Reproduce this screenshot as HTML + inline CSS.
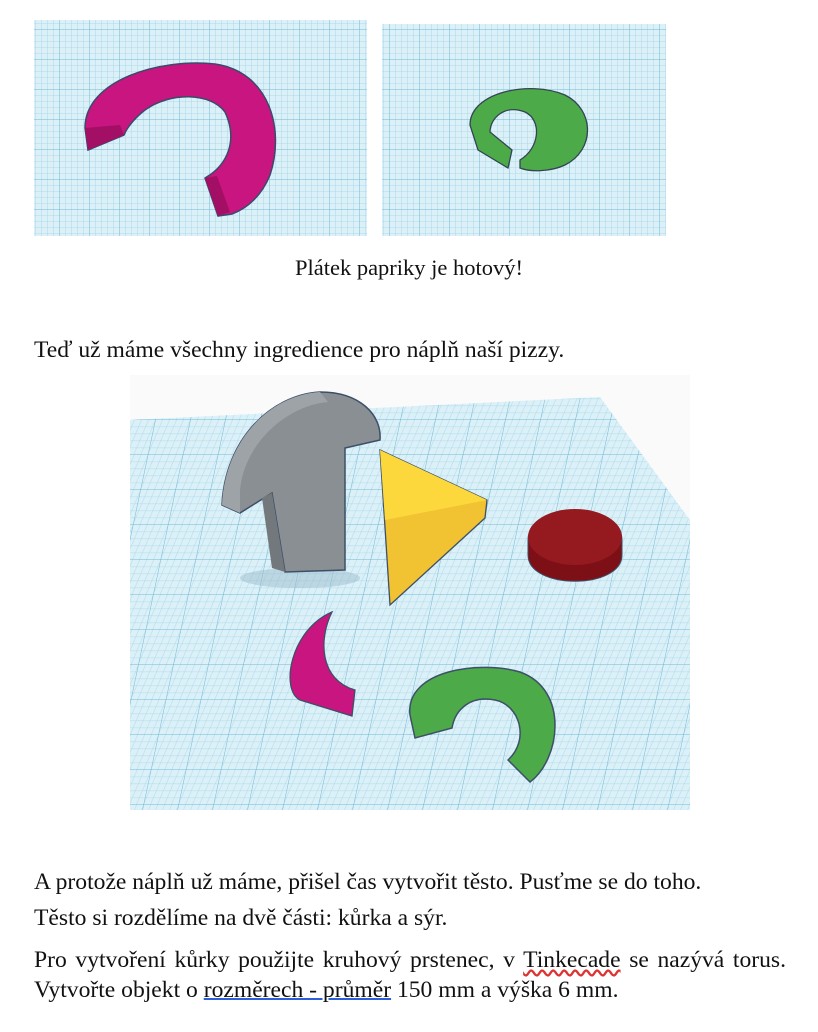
<!DOCTYPE html>
<html><head><meta charset="utf-8"><style>
body{margin:0;width:818px;height:1032px;background:#fff;position:relative;overflow:hidden;font-family:"Liberation Serif",serif;font-size:23.6px;color:#111}
.t{position:absolute;left:34px;white-space:nowrap}
svg{position:absolute}
</style></head><body>
<svg width="818" height="1032" viewBox="0 0 818 1032" style="left:0;top:0">
<defs>
<pattern id="g" width="6" height="6" patternUnits="userSpaceOnUse">
<rect width="6" height="6" fill="#dcf0f8"/><path d="M6 0V6M0 6H6" stroke="#9fd3e7" stroke-width="0.8"/></pattern>
<pattern id="G" width="30" height="30" patternUnits="userSpaceOnUse">
<rect width="30" height="30" fill="url(#g)"/><path d="M30 0V30M0 30H30" stroke="#6fb9d6" stroke-width="1"/></pattern>
<pattern id="gs" width="7" height="7" patternUnits="userSpaceOnUse" patternTransform="skewX(-12)">
<rect width="7" height="7" fill="#dcf0f8"/><path d="M7 0V7M0 7H7" stroke="#9fd3e7" stroke-width="0.8"/></pattern>
<pattern id="Gs" width="35" height="35" patternUnits="userSpaceOnUse" patternTransform="skewX(-12)">
<rect width="35" height="35" fill="url(#gs)"/><path d="M35 0V35M0 35H35" stroke="#6fb9d6" stroke-width="1"/></pattern>
</defs>
<rect x="34" y="20" width="333" height="216" fill="url(#G)"/>
<rect x="382" y="24" width="284" height="212" fill="url(#G)"/>
<path d="M85 128 C85 80 160 58 215 64 C270 72 285 130 270 175 C262 195 248 208 232 214 L218 216 L205 178 C228 165 238 140 225 112 C210 92 170 92 145 110 C132 120 126 130 124 135 L88 150 Z" fill="#c9157f" stroke="#3b4a6b" stroke-width="1.5"/>
<path d="M85 128 L88 150 L124 135 L120 125Z" fill="#a40f66"/>
<path d="M205 178 L218 216 L230 212 L217 176Z" fill="#a40f66"/>
<path d="M470 125 C470 92 530 80 565 95 C595 110 595 150 565 165 C550 172 530 172 520 168 L520 160 C540 148 542 120 525 112 C505 104 490 118 490 132 L512 150 L508 168 L478 150 Z" fill="#4daa48" stroke="#345" stroke-width="1.3"/>
<rect x="130" y="375" width="560" height="435" fill="#fafafa"/>
<polygon points="130,420 600,397 690,520 690,810 130,810" fill="url(#Gs)"/>
<ellipse cx="300" cy="578" rx="60" ry="10" fill="#9bbccc" opacity=".5"/>
<path d="M222 505 C225 440 270 395 320 392 C360 392 382 415 380 440 L345 448 L345 570 L285 572 L272 493 L240 513 Z" fill="#8a8f93" stroke="#3d5068" stroke-width="1.5"/>
<path d="M222 505 C225 440 270 395 320 392 L328 402 C290 405 245 440 240 490 L240 513Z" fill="#9ea3a7"/>
<path d="M272 493 L285 572 L272 568 L262 498Z" fill="#73787c"/>
<polygon points="380,450 487,500 485,518 390,605" fill="#f1c232" stroke="#3d5068" stroke-width="1.3"/>
<polygon points="380,450 487,500 385,520" fill="#fdd83c"/>
<path d="M528 540 C528 505 622 505 622 540 L622 555 C622 590 528 590 528 555Z" fill="#7c1016" stroke="#3d5068" stroke-width="1"/>
<ellipse cx="575" cy="537" rx="47" ry="28" fill="#951a20"/>
<path d="M332 612 C290 630 280 690 300 700 L352 716 L355 690 C320 680 318 640 332 612Z" fill="#c9157f" stroke="#3d5068" stroke-width="1.3"/>
<path d="M410 715 C405 670 480 660 520 672 C570 690 560 760 530 782 L508 760 C530 740 520 705 495 700 C470 695 455 710 452 728 L415 738 Z" fill="#4daa48" stroke="#3d5068" stroke-width="1.5"/>
</svg>
<div class="t" style="left:0;width:818px;text-align:center;top:255px;font-size:22.5px">Plátek papriky je hotový!</div>
<div class="t" style="top:337px">Teď už máme všechny ingredience pro náplň naší pizzy.</div>
<div class="t" style="top:869px">A protože náplň už máme, přišel čas vytvořit těsto. Pusťme se do toho.</div>
<div class="t" style="top:905px">Těsto si rozdělíme na dvě části: kůrka a sýr.</div>
<div class="t" style="top:947px;width:752px;text-align:justify;text-align-last:justify">Pro vytvoření kůrky použijte kruhový prstenec, v <span style="text-decoration:underline wavy #d33">Tinkecade</span> se nazývá torus.</div>
<div class="t" style="top:977px">Vytvořte objekt o <span style="text-decoration:underline;text-decoration-color:#2b5fd9;text-decoration-thickness:2px">rozměrech - průměr</span> 150 mm a výška 6 mm.</div>
</body></html>
